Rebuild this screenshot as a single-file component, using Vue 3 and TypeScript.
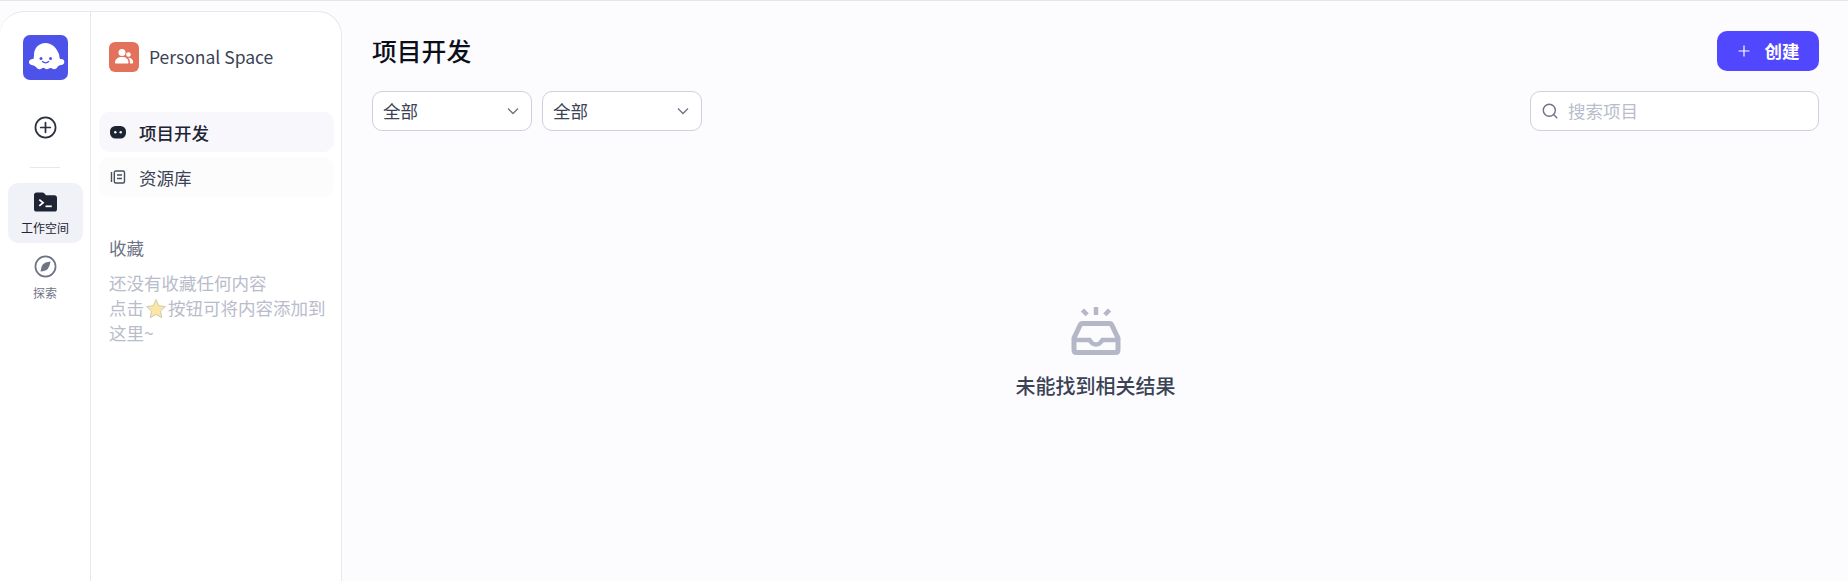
<script setup lang="ts">
// пункты меню рабочей области
const filters = ['全部', '全部'];
</script>

<template>
  <div class="page">
    <aside class="card">
      <nav class="rail">
        <div class="logo">
          <svg viewBox="0 0 45 45" width="45" height="45">
            <rect width="45" height="45" rx="7" fill="#4d53e8" />
            <path
              d="M22.500 8c-6.600 0-11.300 5-11.500 11.500 0 1.600-.2 3.300-.6 4.700-1.800-.4-4 .5-4.400 2.300-.4 2 1.300 3.500 3.500 3.700 1.400.2 2.600.8 3.500 1.900 1 1.300 2.300 2.400 3.800 2.100 1.200-.2 2-1.100 3-1.300 1.600-.3 2.300 1.300 4.100 1.300 1.700 0 2.500-1.400 4-1.200 1.200.2 1.900 1.200 3.200 1.200 1.600 0 2.700-1.200 3.600-2.500.8-1 2-1.400 3.300-1.600 2.100-.3 3.700-1.800 3.300-3.700-.4-1.800-2.500-2.600-4.300-2.200-.5-1.500-.8-3.200-.9-4.700C33.800 13 29.100 8 22.500 8z"
              fill="#fff"
            />
            <circle cx="18" cy="23.500" r="1.500" fill="#4d53e8" />
            <circle cx="27.500" cy="23.500" r="1.500" fill="#4d53e8" />
            <path d="M19.500 26.500c1.600 1.700 4.600 1.700 6.200 0" fill="none" stroke="#4d53e8" stroke-width="1.200" stroke-linecap="round" />
          </svg>
        </div>
        <svg class="add" viewBox="0 0 24 24" width="23" height="23" fill="none" stroke="#2b3040" stroke-width="1.800">
          <circle cx="12" cy="12" r="10.500" />
          <path d="M12 7v10M7 12h10" stroke-linecap="round" />
        </svg>
        <div class="rail-line"></div>
        <div class="rail-item active">
          <svg viewBox="0 0 24 20" width="23" height="20">
            <path d="M2.500 0h6.300c.8 0 1.400.3 1.900.9L12.500 3h9c1.400 0 2.500 1.100 2.500 2.500v12c0 1.400-1.100 2.500-2.500 2.500h-19C1.100 20 0 18.900 0 17.500v-15C0 1.100 1.100 0 2.500 0z" fill="#1d2433" />
            <path d="M5.500 7.500l4 3.300-4 3.300" fill="none" stroke="#fff" stroke-width="1.800" />
            <path d="M12 14.500h6.500" stroke="#fff" stroke-width="1.800" />
          </svg>
          <span>工作空间</span>
        </div>
        <div class="rail-item">
          <svg viewBox="0 0 24 24" width="23" height="23" fill="none">
            <circle cx="12" cy="12" r="10.500" stroke="#6e7385" stroke-width="1.800" />
            <path d="M17.200 6.800c-3.900.5-6.700 1.500-8 3-1.300 1.600-1.800 4.300-2.400 7.400 3.300-.5 6-1.200 7.500-2.700 1.400-1.500 2.300-4.100 2.900-7.700z" fill="#6e7385" />
          </svg>
          <span>探索</span>
        </div>
      </nav>

      <section class="panel">
        <header class="space">
          <div class="space-icon">
            <svg viewBox="0 0 20 20" width="20" height="20" fill="#fff">
              <circle cx="8" cy="5.500" r="3.500" />
              <path d="M1 15.500c0-3.500 3-5.500 7-5.500s6.500 2 6.500 5.500c0 .6-.4 1-1 1H2c-.6 0-1-.4-1-1z" />
              <circle cx="14.500" cy="7.500" r="2.300" />
              <path d="M14.300 10.700c2.800 0 4.900 1.600 4.900 4.500 0 .8-.5 1.300-1.200 1.300h-2c.2-2.300-.4-4.300-1.700-5.800z" />
            </svg>
          </div>
          <span>Personal Space</span>
        </header>

        <div class="menu">
          <div class="menu-item current">
            <svg viewBox="0 0 16 14" width="16" height="14">
              <rect y="1" width="16" height="12.500" rx="5.500" fill="#1d2433" />
              <circle cx="5.300" cy="7.200" r="1.200" fill="#fff" />
              <circle cx="10.700" cy="7.200" r="1.200" fill="#fff" />
            </svg>
            <span>项目开发</span>
          </div>
          <div class="menu-item">
            <svg viewBox="0 0 16 14" width="16" height="14" fill="none" stroke="#4a4f5f" stroke-width="1.400">
              <rect x="4.300" y="1" width="10.200" height="12" rx="1.500" />
              <path d="M1.500 2v10M7 5h5M7 8.500h5" />
            </svg>
            <span>资源库</span>
          </div>
        </div>

        <h4 class="fav-title">收藏</h4>
        <p class="fav-text">
          还没有收藏任何内容<br />点击<svg class="star" viewBox="0 0 20 20" width="22" height="22"><path d="M10 1.500l2.500 5.600 6 .7-4.500 4.100 1.300 6L10 14.900 4.700 18l1.300-6L1.500 7.800l6-.7z" fill="#fbe6a8" stroke="#c8c4a8" stroke-width=".8" /></svg>按钮可将内容添加到这里~
        </p>
      </section>
    </aside>

    <main class="main">
      <div class="head">
        <h1>项目开发</h1>
        <button class="create">
          <svg viewBox="0 0 14 14" width="14" height="14" fill="none" stroke="#fff" stroke-width="1.200">
            <path d="M7 1.500v11M1.500 7h11" />
          </svg>
          <span>创建</span>
        </button>
      </div>
      <div class="filters">
        <div v-for="(f, i) in filters" :key="i" class="select">
          <span>{{ f }}</span>
          <svg viewBox="0 0 12 8" width="12" height="8" fill="none" stroke="#6e7385" stroke-width="1.300">
            <path d="M1 1.500l5 5 5-5" />
          </svg>
        </div>
        <div class="search">
          <svg viewBox="0 0 16 16" width="16" height="16" fill="none" stroke="#6e7385" stroke-width="1.400">
            <circle cx="7.300" cy="7.300" r="6" />
            <path d="M11.800 11.800l3 3" stroke-linecap="round" />
          </svg>
          <span>搜索项目</span>
        </div>
      </div>
      <div class="empty">
        <svg viewBox="0 0 50 48" width="50" height="48">
          <path d="M22.800 0h4.400v8h-4.400zM9.800 4.500l3.200-3 4.800 4.800-3.200 3zM40.200 4.500l-3.200-3-4.800 4.800 3.200 3z" fill="#b4b7c6" />
          <path
            d="M11.500 16.500h27c1 0 1.900.6 2.300 1.500L47 31v12c0 1.500-1 2.500-2.500 2.500h-39C4 45.500 3 44.500 3 43V31l6.200-13c.4-.9 1.300-1.500 2.300-1.500z"
            fill="none"
            stroke="#b4b7c6"
            stroke-width="5"
            stroke-linejoin="round"
          />
          <path d="M4 33h14.500c2 3.500 4 4.500 6.500 4.500s4.500-1 6.500-4.500H46" fill="none" stroke="#b4b7c6" stroke-width="4.500" />
        </svg>
        <span>未能找到相关结果</span>
      </div>
    </main>
  </div>
</template>

<style>
html,
body {
  margin: 0;
  background: #fcfcff;
}
</style>

<style scoped>
.page {
  display: flex;
  height: 580px;
  overflow: hidden;
  border-top: 1px solid #e4e5ea;
  background: #fcfcff;
  font-family: "Noto Sans CJK SC", "Noto Sans", sans-serif;
  color: #1d2433;
}
.card {
  display: flex;
  flex: none;
  box-sizing: border-box;
  width: 342px;
  height: 590px;
  margin-top: 10px;
  background: #fff;
  border: 1px solid #e6e7ef;
  border-left: none;
  border-radius: 24px 24px 0 0;
}
.rail {
  display: flex;
  flex: none;
  flex-direction: column;
  align-items: center;
  box-sizing: border-box;
  width: 91px;
  padding-top: 23px;
  border-right: 1px solid #e6e7ef;
}
.logo {
  height: 45px;
}
.add {
  margin: 36px 0 1px 1px;
}
.rail-line {
  width: 30px;
  height: 1px;
  margin: 27px 0 15px;
  background: #e6e7ef;
}
.rail-item {
  display: flex;
  flex-direction: column;
  align-items: center;
  box-sizing: border-box;
  width: 75px;
  height: 60px;
  padding-top: 9px;
  border-radius: 10px;
  font-size: 12px;
  line-height: 18px;
  color: #6e7385;
}
.rail-item svg {
  flex: none;
  margin-left: 1px;
}
.rail-item span {
  margin-top: 6px;
}
.rail-item.active {
  margin-bottom: 3px;
  background: #f1f2f8;
  color: #1d2433;
}
.rail-item.active span {
  margin-top: 7px;
}
.panel {
  flex: 1;
  padding: 30px 7px 0 8px;
}
.space {
  display: flex;
  align-items: center;
  gap: 10px;
  padding-left: 10px;
  font-size: 17.500px;
  line-height: 30px;
  color: #3a4254;
}
.space-icon {
  display: flex;
  align-items: center;
  justify-content: center;
  width: 30px;
  height: 30px;
  border-radius: 6px;
  background: #e2725b;
}
.menu {
  display: flex;
  flex-direction: column;
  gap: 5px;
  margin-top: 40px;
}
.menu-item {
  display: flex;
  align-items: center;
  gap: 13px;
  height: 40px;
  padding-left: 11px;
  border-radius: 10px;
  background: #fcfcfd;
  font-size: 17.500px;
  color: #3a4254;
}
.menu-item.current {
  background: #f8f8fc;
  color: #1d2433;
  font-weight: 500;
}
.fav-title {
  margin: 38px 0 0 10px;
  font-size: 17.500px;
  font-weight: 400;
  line-height: 25px;
  color: #6e7385;
}
.fav-text {
  margin: 10px 0 0 10px;
  font-size: 17.500px;
  line-height: 25px;
  color: #b9bccb;
}
.star {
  margin: 0 1px;
  vertical-align: -5px;
}
.main {
  flex: 1;
  display: flex;
  flex-direction: column;
  padding: 30px 29px 0 30px;
  min-width: 0;
}
.head {
  display: flex;
  align-items: center;
  justify-content: space-between;
  height: 40px;
}
.head h1 {
  margin: -2px 0 0;
  font-size: 24.800px;
  font-weight: 500;
  color: #0b0f19;
}
.create {
  display: flex;
  align-items: center;
  justify-content: center;
  gap: 14px;
  width: 102px;
  height: 40px;
  padding: 0;
  border: none;
  border-radius: 10px;
  background: #5147ff;
  color: #fff;
  font-family: inherit;
  font-size: 17.500px;
  font-weight: 700;
}
.create span {
  margin-top: -2px;
}
.filters {
  display: flex;
  gap: 10px;
  margin-top: 20px;
}
.select,
.search {
  display: flex;
  align-items: center;
  box-sizing: border-box;
  height: 40px;
  background: #fff;
  border: 1px solid #cdd0e0;
  border-radius: 10px;
  font-size: 17.500px;
}
.select span,
.search span {
  margin-top: -2px;
}
.select {
  justify-content: space-between;
  width: 160px;
  padding: 0 12px 0 10px;
  color: #3a4254;
}
.search {
  gap: 10px;
  width: 289px;
  margin-left: auto;
  padding-left: 11px;
  color: #b9bccb;
}
.empty {
  display: flex;
  flex-direction: column;
  align-items: center;
  margin-top: 176px;
  font-size: 20px;
  font-weight: 500;
  color: #3a4254;
}
.empty span {
  margin-top: 16px;
}
</style>
